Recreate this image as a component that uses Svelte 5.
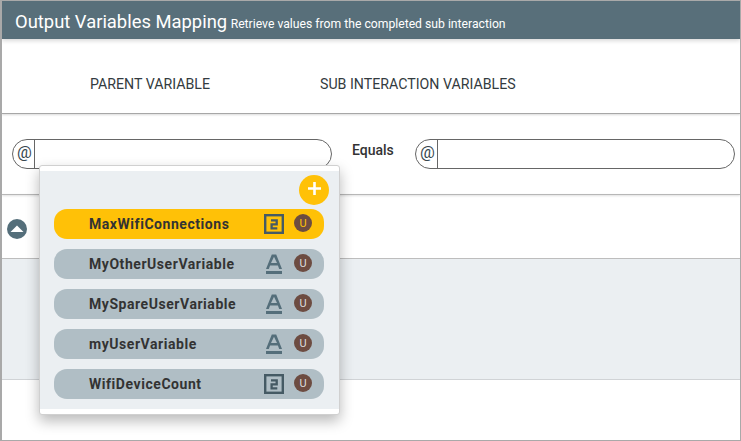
<script>
  const variables = [
    { name: "MaxWifiConnections", type: "number", selected: true },
    { name: "MyOtherUserVariable", type: "text" },
    { name: "MySpareUserVariable", type: "text" },
    { name: "myUserVariable", type: "text" },
    { name: "WifiDeviceCount", type: "number" }
  ];
</script>

<div class="frame">
  <header class="title-bar">
    <h1>Output Variables Mapping</h1>
    <span class="subtitle">Retrieve values from the completed sub interaction</span>
  </header>

  <div class="columns">
    <span class="parent-col">PARENT VARIABLE</span>
    <span class="sub-col">SUB INTERACTION VARIABLES</span>
  </div>

  <div class="mapping">
    <div class="field left-field">
      <span class="at">@</span>
    </div>
    <span class="equals">Equals</span>
    <div class="field right-field">
      <span class="at">@</span>
    </div>
  </div>

  <div class="toggle-row">
    <svg class="collapse" viewBox="0 0 20 20" width="20" height="20">
      <circle cx="10" cy="10" r="10" fill="#546e7a" />
      <path d="M3.5 13 L10 6.5 L16.5 13 Z" fill="#fff" />
    </svg>
  </div>

  <div class="grey-band"></div>
  <div class="white-band"></div>

  <div class="dropdown">
    <div class="dropdown-body">
      <div class="add-row">
        <button class="add" aria-label="Add variable">
          <svg viewBox="0 0 13 13" width="13" height="13">
            <path d="M6.5 0 V13 M0 6.5 H13" stroke="#fff" stroke-width="2.6" />
          </svg>
        </button>
      </div>
      {#each variables as v}
        <div class="pill" class:selected={v.selected}>
          <span class="name">{v.name}</span>
          {#if v.type === "number"}
            <svg class="type" viewBox="0 0 20 20" width="20" height="20">
              <rect x="1.2" y="1.2" width="17.6" height="17.6" fill="none" stroke="#455a64" stroke-width="2.4" />
              <path d="M7 6.3 H12.7 V10.3 H7.6 V14.3 H13.3" fill="none" stroke="#455a64" stroke-width="2.3" />
            </svg>
          {:else}
            <svg class="type" viewBox="0 0 20 20" width="20" height="20">
              <path fill-rule="evenodd" fill="#546e7a" d="M2 15 L7.8 .5 H12.2 L18 15 H15.2 L13.9 11.5 H6.1 L4.8 15 Z M7 9 H13 L10 2.8 Z" />
              <rect x="2" y="17" width="16" height="3" fill="#546e7a" />
            </svg>
          {/if}
          <span class="scope">U</span>
        </div>
      {/each}
    </div>
  </div>
</div>

<style>
  :global(body) {
    margin: 0;
  }

  .frame {
    position: relative;
    box-sizing: border-box;
    width: 741px;
    height: 441px;
    background: #fff;
    border-top: 1px solid #a9a9a9;
    border-right: 1px solid #a9a9a9;
    border-bottom: 1px solid #a9a9a9;
    border-left: 2px solid #a9a9a9;
    font-family: Roboto, "Liberation Sans", sans-serif;
    overflow: hidden;
  }

  .title-bar {
    display: flex;
    align-items: baseline;
    gap: 3.5px;
    height: 38px;
    box-sizing: border-box;
    padding: 10px 0 0 13px;
    background: #586f7a;
    color: #fff;
    box-shadow: 0 2px 4px rgba(0, 0, 0, 0.15);
  }

  h1 {
    margin: 0;
    font-size: 18.4px;
    font-weight: 400;
    line-height: 22px;
  }

  .subtitle {
    font-size: 12.2px;
  }

  .columns {
    display: flex;
    height: 75px;
    box-sizing: border-box;
    padding: 37px 0 0 88px;
    font-size: 14.2px;
    line-height: 16px;
    color: #333b40;
    border-bottom: 1px solid #a9a9a9;
    box-shadow: 0 1px 2px rgba(0, 0, 0, 0.15);
  }

  .sub-col {
    margin-left: 110px;
  }

  .mapping {
    display: flex;
    align-items: flex-start;
    height: 81px;
    box-sizing: border-box;
    padding: 25px 0 0 10px;
    border-bottom: 1px solid #bdbdbd;
    box-shadow: 0 1px 2px rgba(0, 0, 0, 0.12);
  }

  .field {
    display: flex;
    box-sizing: border-box;
    width: 320px;
    height: 30px;
    border: 1px solid #666;
    border-radius: 15px;
  }

  .at {
    width: 22px;
    box-sizing: border-box;
    padding-left: 4px;
    border-right: 1px solid #666;
    font-size: 16.5px;
    line-height: 26px;
    color: #37474f;
  }

  .equals {
    width: 63px;
    padding: 3px 0 0 20px;
    font-size: 14px;
    font-weight: 500;
    color: #333;
  }

  .toggle-row {
    height: 64px;
    box-sizing: border-box;
    padding: 24px 0 0 5px;
    border-bottom: 1px solid #bdbdbd;
    box-shadow: 0 1px 3px rgba(0, 0, 0, 0.2);
  }

  .collapse {
    display: block;
  }

  .grey-band {
    height: 120px;
    background: #ebeff2;
    border-bottom: 1px solid #d0d3d6;
  }

  .white-band {
    height: 60px;
  }

  .dropdown {
    position: absolute;
    left: 37px;
    top: 164px;
    width: 301px;
    height: 250px;
    box-sizing: border-box;
    padding: 5px 0;
    background: #fff;
    border: 1px solid #d0d0d0;
    border-radius: 3px;
    box-shadow: 0 6px 14px rgba(0, 0, 0, 0.28);
  }

  .dropdown-body {
    height: 100%;
    box-sizing: border-box;
    padding: 4px 15px 0 14px;
    background: #ebeff2;
    display: flex;
    flex-direction: column;
    gap: 10px;
  }

  .add-row {
    display: flex;
    justify-content: flex-end;
    height: 30px;
    margin-bottom: -6px;
    margin-right: -5px;
  }

  .add {
    display: flex;
    align-items: center;
    justify-content: center;
    width: 30px;
    height: 30px;
    padding: 0 0 3px;
    border: none;
    border-radius: 50%;
    background: #ffc107;
  }

  .pill {
    display: flex;
    align-items: center;
    height: 30px;
    flex: none;
    box-sizing: border-box;
    padding: 0 12px 0 35px;
    border-radius: 13px;
    background: #b0bec5;
    color: #333;
  }

  .pill.selected {
    background: #ffc107;
  }

  .name {
    flex: 1;
    font-family: Roboto, "Liberation Sans", sans-serif;
    font-size: 14px;
    font-weight: 700;
    letter-spacing: 0.55px;
  }

  .type {
    margin-right: 10px;
  }

  .scope {
    display: flex;
    align-items: center;
    justify-content: center;
    width: 18px;
    height: 18px;
    margin-top: -2px;
    border-radius: 50%;
    background: #6d4c41;
    color: #ddd;
    font-size: 11px;
  }

  .selected .scope {
    color: #ffc107;
  }
</style>
